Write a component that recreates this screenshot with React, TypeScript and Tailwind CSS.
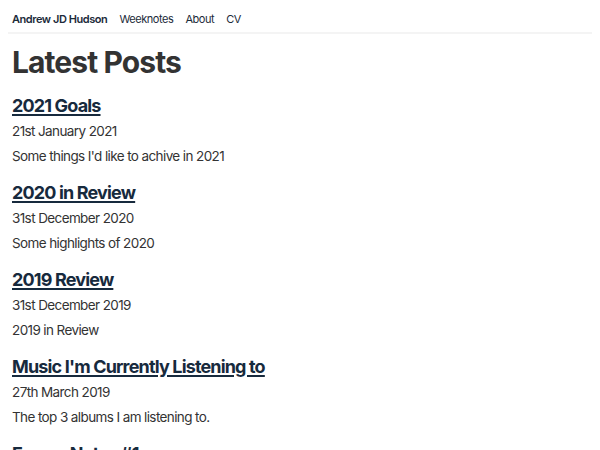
const posts = [
  { title: "2021 Goals", date: "21st January 2021", desc: "Some things I'd like to achive in 2021" },
  { title: "2020 in Review", date: "31st December 2020", desc: "Some highlights of 2020" },
  { title: "2019 Review", date: "31st December 2019", desc: "2019 in Review" },
  { title: "Music I'm Currently Listening to", date: "27th March 2019", desc: "The top 3 albums I am listening to." },
  { title: "Emacs Notes #1", date: "12th March 2019", desc: "Some notes on Emacs" },
];

export default function App() {
  return (
    <div className="min-h-screen bg-white px-2 font-['Inter',sans-serif] text-[#333]">
      <nav className="flex items-center gap-[12px] border-b-2 border-[#f4f4f4] px-1 pt-[11px] pb-[4px] text-[11px] tracking-[-0.04em] text-[#1c2b3a]">
        <a className="font-semibold">Andrew JD Hudson</a>
        <a>Weeknotes</a>
        <a>About</a>
        <a>CV</a>
      </nav>
      <main className="px-1">
        <h1 className="mt-[8px] text-[30px] font-bold leading-[40px] tracking-[-0.03em] text-[#333]">Latest Posts</h1>
        {posts.map((p) => (
          <article key={p.title} className="mt-[15px] first-of-type:mt-[12px]">
            <h2 className="text-[18px] font-bold leading-[24px] tracking-[-0.047em]">
              <a href="#" className="text-[#172a3d] underline decoration-2 underline-offset-2">{p.title}</a>
            </h2>
            <div className="text-[13.5px] leading-[20px] tracking-[-0.045em]">
              <p className="mt-[3px]">{p.date}</p>
              <p className="mt-[5px]">{p.desc}</p>
            </div>
          </article>
        ))}
      </main>
    </div>
  );
}
